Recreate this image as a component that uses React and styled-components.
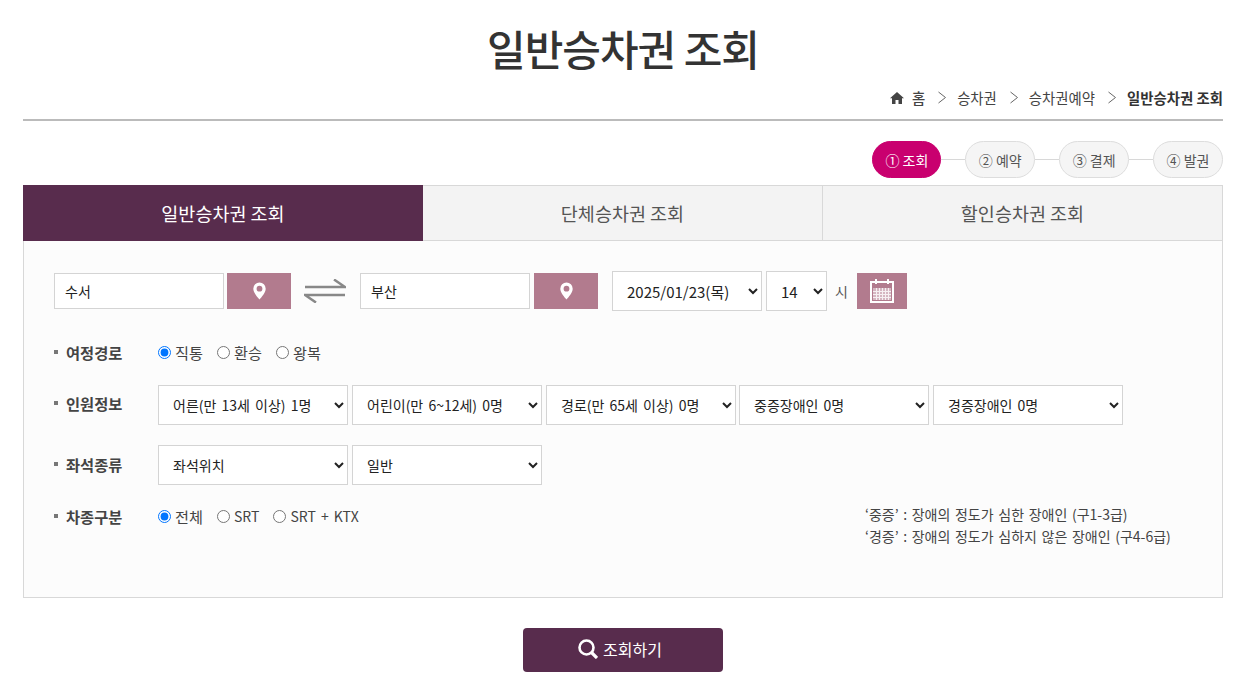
import styled, { createGlobalStyle } from 'styled-components'

const GlobalStyle = createGlobalStyle`
  html, body { margin: 0; padding: 0; background: #fff; }
  body {
    font-family: "Noto Sans CJK KR", "Noto Sans", sans-serif;
    color: #333;
    font-size: 14px;
  }
  * { box-sizing: border-box; }
`

const steps = ['① 조회', '② 예약', '③ 결제', '④ 발권']
const tabs = ['일반승차권 조회', '단체승차권 조회', '할인승차권 조회']
const crumbs = ['승차권', '승차권예약']

function Chevron() {
  return (
    <svg width="8" height="13" viewBox="0 0 8 13" fill="none" stroke="#666" strokeWidth="1">
      <path d="M.5 1l7 5.500-7 5.500" />
    </svg>
  )
}

function Pin() {
  return (
    <svg width="13" height="18" viewBox="0 0 13 17">
      <path fill="#fff" fillRule="evenodd" d="M6.500 0A6.200 6.200 0 0 0 .3 6.200c0 3.600 4.200 8.600 6.200 10.800 2-2.200 6.200-7.200 6.200-10.800A6.200 6.200 0 0 0 6.500 0zm0 3.300a2.900 2.900 0 1 1 0 5.800 2.900 2.900 0 0 1 0-5.800z" />
    </svg>
  )
}

function App() {
  return (
    <>
      <GlobalStyle />
      <Page>
        <Title>일반승차권 조회</Title>
        <Breadcrumb>
          <svg width="14" height="12" viewBox="0 0 14 12">
            <path fill="#444" d="M7 0L0 6.200h2V12h3.500V8h3v4H12V6.200h2z" />
          </svg>
          <CrumbHome>홈</CrumbHome>
          {crumbs.map((c) => (
            <Crumb key={c}>
              <Chevron />
              <span>{c}</span>
            </Crumb>
          ))}
          <Crumb $current>
            <Chevron />
            <span>일반승차권 조회</span>
          </Crumb>
        </Breadcrumb>

        <Steps>
          {steps.map((s, i) => (
            <StepWrap key={s}>
              {i > 0 && <StepLine />}
              <Step $active={i === 0}>{s}</Step>
            </StepWrap>
          ))}
        </Steps>

        <Tabs>
          {tabs.map((t, i) => (
            <Tab key={t} $active={i === 0}>{t}</Tab>
          ))}
        </Tabs>

        <Panel>
          <SearchRow>
            <StationInput defaultValue="수서" />
            <PinButton $gap="3px"><Pin /></PinButton>
            <SwapIcon viewBox="0 0 42 24" width="42" height="24" fill="none" stroke="#888" strokeWidth="2.500">
              <path d="M1 8h40L30 .5" />
              <path d="M41 16H1l11 7.500" />
            </SwapIcon>
            <StationInput defaultValue="부산" />
            <PinButton $gap="4px"><Pin /></PinButton>
            <DateSelect $w="150px" $ml="14px" defaultValue="d">
              <option value="d">2025/01/23(목)</option>
            </DateSelect>
            <DateSelect $w="61px" $ml="4px" defaultValue="14">
              <option value="14">14</option>
            </DateSelect>
            <HourLabel>시</HourLabel>
            <CalendarButton>
              <svg width="24" height="24" viewBox="0 0 24 24">
                <rect x="1" y="3" width="22" height="20" fill="none" stroke="#fff" strokeWidth="2" />
                <path stroke="#fff" strokeWidth="2" d="M6 0v5M18 0v5" />
                <rect x="3" y="9" width="18" height="12" fill="#fff" opacity=".45" />
                <path stroke="#fff" strokeWidth="1" opacity=".8" d="M3 12.500h18M3 15.500h18M3 18.500h18M6.500 9v12M9.500 9v12M12.500 9v12M15.500 9v12M18.500 9v12" />
              </svg>
            </CalendarButton>
          </SearchRow>

          <FormRow $mt="29px" $h="24px">
            <Label>여정경로</Label>
            <RadioGroup>
              <RadioItem><input type="radio" name="route" defaultChecked />직통</RadioItem>
              <RadioItem><input type="radio" name="route" />환승</RadioItem>
              <RadioItem><input type="radio" name="route" />왕복</RadioItem>
            </RadioGroup>
          </FormRow>

          <FormRow $mt="21px" $h="40px">
            <Label $top="-2px">인원정보</Label>
            <SelectGroup>
              <FormSelect><option>어른(만 13세 이상) 1명</option></FormSelect>
              <FormSelect><option>어린이(만 6~12세) 0명</option></FormSelect>
              <FormSelect><option>경로(만 65세 이상) 0명</option></FormSelect>
              <FormSelect $tight><option>중증장애인 0명</option></FormSelect>
              <FormSelect><option>경증장애인 0명</option></FormSelect>
            </SelectGroup>
          </FormRow>

          <FormRow $mt="20px" $h="40px">
            <Label $top="-1px">좌석종류</Label>
            <SelectGroup>
              <FormSelect><option>좌석위치</option></FormSelect>
              <FormSelect><option>일반</option></FormSelect>
            </SelectGroup>
          </FormRow>

          <LastRow>
            <Label>차종구분</Label>
            <RadioGroup>
              <RadioItem><input type="radio" name="train" defaultChecked />전체</RadioItem>
              <RadioItem $latin><input type="radio" name="train" />SRT</RadioItem>
              <RadioItem $latin><input type="radio" name="train" />SRT + KTX</RadioItem>
            </RadioGroup>
            <Notes>
              <p>‘중증’ : 장애의 정도가 심한 장애인 (구1-3급)</p>
              <p>‘경증’ : 장애의 정도가 심하지 않은 장애인 (구4-6급)</p>
            </Notes>
          </LastRow>
        </Panel>

        <SubmitWrap>
          <SubmitButton>
            <svg width="20" height="20" viewBox="0 0 20 20" fill="none" stroke="#fff">
              <circle cx="8.500" cy="8.500" r="7" strokeWidth="2.600" />
              <path d="M13.500 13.500L19 19" strokeWidth="3.200" />
            </svg>
            조회하기
          </SubmitButton>
        </SubmitWrap>
      </Page>
    </>
  )
}

export default App

const Page = styled.div`
  width: 1200px;
  margin-left: 23px;
`

const Title = styled.h1`
  margin: 0;
  padding-top: 18px;
  height: 76px;
  line-height: 60px;
  text-align: center;
  font-size: 42px;
  font-weight: 500;
  color: #333;
  letter-spacing: -1px;
`

const Breadcrumb = styled.div`
  height: 45px;
  border-bottom: 2px solid #bbb;
  display: flex;
  align-items: center;
  justify-content: flex-end;
  font-size: 14.400px;
  color: #444;
`

const CrumbHome = styled.span`
  margin-left: 8px;
  font-weight: 500;
`

const Crumb = styled.span`
  display: inline-flex;
  align-items: center;
  gap: 11px;
  margin-left: 13px;
  font-weight: ${(p) => (p.$current ? 700 : 400)};
  color: ${(p) => (p.$current ? '#333' : '#444')};
`

const Steps = styled.div`
  height: 64px;
  padding-top: 20px;
  display: flex;
  justify-content: flex-end;
  align-items: flex-start;
`

const StepWrap = styled.div`
  display: flex;
  align-items: center;
`

const StepLine = styled.span`
  width: 24px;
  height: 1px;
  background: #d8d8d8;
`

const Step = styled.div`
  height: 37px;
  padding: 0 ${(p) => (p.$active ? '12px' : '12.500px')};
  border-radius: 19px;
  border: 1px solid ${(p) => (p.$active ? '#c9006f' : '#ddd')};
  background: ${(p) => (p.$active ? '#c9006f' : '#f5f5f5')};
  color: ${(p) => (p.$active ? '#fff' : '#555')};
  display: flex;
  align-items: center;
  justify-content: center;
  font-size: 14px;
`

const Tabs = styled.div`
  display: grid;
  grid-template-columns: 400px 400px 400px;
  height: 56px;
`

const Tab = styled.div`
  display: flex;
  align-items: center;
  justify-content: center;
  font-size: 18.500px;
  background: ${(p) => (p.$active ? '#582c4d' : '#f3f3f3')};
  color: ${(p) => (p.$active ? '#fff' : '#555')};
  border: 1px solid ${(p) => (p.$active ? '#582c4d' : '#d8d8d8')};
  border-left-width: ${(p) => (p.$active ? '1px' : '0')};
`

const Panel = styled.div`
  height: 357px;
  background: #fcfcfc;
  border: 1px solid #d8d8d8;
  border-top: 0;
  padding: 30px 30px 0;
`

const SearchRow = styled.div`
  display: flex;
  align-items: center;
  height: 40px;
`

const StationInput = styled.input`
  width: 170px;
  height: 36px;
  border: 1px solid #d4d4d4;
  background: #fff;
  padding: 0 10px;
  font: inherit;
  font-size: 14px;
  color: #222;
  outline: none;
`

const PinButton = styled.button`
  width: 64px;
  height: 36px;
  margin-left: ${(p) => p.$gap};
  border: 0;
  padding: 0;
  background: #b27b8e;
  display: flex;
  align-items: center;
  justify-content: center;
`

const SwapIcon = styled.svg`
  margin: 0 14px 0 13px;
`

const DateSelect = styled.select`
  width: ${(p) => p.$w};
  height: 40px;
  margin-left: ${(p) => p.$ml};
  padding-left: 10px;
  border: 1px solid #d4d4d4;
  background: #fff;
  font: inherit;
  font-size: 15px;
  color: #222;
  border-radius: 0;
`

const HourLabel = styled.span`
  margin: 0 9px 0 8px;
  font-size: 14px;
  color: #555;
`

const CalendarButton = styled.button`
  width: 50px;
  height: 36px;
  border: 0;
  padding: 0;
  background: #b27b8e;
  display: flex;
  align-items: center;
  justify-content: center;
`

const FormRow = styled.div`
  display: flex;
  align-items: center;
  height: ${(p) => p.$h};
  margin-top: ${(p) => p.$mt};
`

const LastRow = styled.div`
  display: flex;
  align-items: flex-start;
  margin-top: 19px;
`

const Label = styled.div`
  width: 104px;
  position: relative;
  top: ${(p) => p.$top || '0'};
  padding-left: 12px;
  font-size: 15.300px;
  font-weight: 700;
  color: #444;
  line-height: 24px;
  &::before {
    content: '';
    position: absolute;
    left: 0;
    top: 10px;
    width: 4px;
    height: 4px;
    background: #777;
  }
`

const RadioGroup = styled.div`
  display: flex;
  align-items: center;
  gap: 14px;
  height: 24px;
`

const RadioItem = styled.label`
  display: inline-flex;
  align-items: center;
  font-size: ${(p) => (p.$latin ? '14px' : '15.200px')};
  word-spacing: 2px;
  color: #444;
  input {
    margin: 0 4px 0 0;
    width: 13px;
    height: 13px;
  }
`

const SelectGroup = styled.div`
  display: flex;
  gap: 4px;
`

const FormSelect = styled.select`
  width: 190px;
  height: 40px;
  margin-left: ${(p) => (p.$tight ? '-1px' : '0')};
  padding-left: 10px;
  border: 1px solid #d4d4d4;
  background: #fff;
  font: inherit;
  font-size: 14px;
  word-spacing: 2px;
  color: #222;
  border-radius: 0;
`

const Notes = styled.div`
  margin-left: auto;
  margin-right: 19px;
  margin-top: -1px;
  font-size: 14px;
  word-spacing: 1.500px;
  color: #444;
  line-height: 22px;
  width: 308px;
  white-space: nowrap;
  p { margin: 0; }
`

const SubmitWrap = styled.div`
  display: flex;
  justify-content: center;
  padding-top: 30px;
`

const SubmitButton = styled.button`
  width: 200px;
  height: 44px;
  border: 0;
  border-radius: 4px;
  padding: 0 6px 2px 0;
  background: #582c4d;
  color: #fff;
  font: inherit;
  font-size: 16px;
  display: flex;
  align-items: center;
  justify-content: center;
  gap: 5px;
`
